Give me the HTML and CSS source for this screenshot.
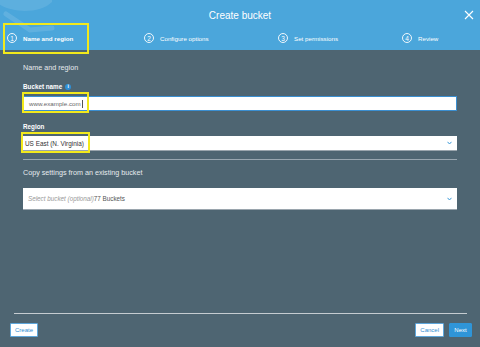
FILE: index.html
```html
<!DOCTYPE html>
<html>
<head>
<meta charset="utf-8">
<link rel="stylesheet" href="styles.css">
</head>
<body>
<div class="page">
  <header class="header">
    <svg class="watermark" width="80" height="50" viewBox="0 0 80 50">
      <path d="M-4 2 C 10 14, 40 14, 52 2 L 52 -4 L -4 -4 Z" fill="rgba(255,255,255,0.10)"/>
      <path d="M6 14 L 30 30 L 52 28" fill="none" stroke="rgba(255,255,255,0.12)" stroke-width="5" stroke-linecap="round"/>
    </svg>
    <div class="title-row">Create bucket</div>
    <svg class="close" width="10" height="10" viewBox="0 0 10 10">
      <path d="M1 1 L9 9 M9 1 L1 9" stroke="#fff" stroke-width="1.1" fill="none"/>
    </svg>
    <div class="steps">
      <div class="step active"><span class="num">1</span><span class="step-text">Name and region</span><span class="hl hl-step"></span></div>
      <div class="step"><span class="num">2</span><span class="step-text">Configure options</span></div>
      <div class="step"><span class="num">3</span><span class="step-text">Set permissions</span></div>
      <div class="step"><span class="num">4</span><span class="step-text">Review</span></div>
    </div>
  </header>

  <main class="content">
    <div class="section-title">Name and region</div>
    <div class="label label-first">Bucket name <span class="info">i</span></div>
    <div class="field">
      <div class="input"><span class="input-text">www.example.com</span><span class="caret"></span></div>
      <span class="hl hl-input"></span>
    </div>
    <div class="label label-region">Region</div>
    <div class="field">
      <div class="select"><span class="select-text">US East (N. Virginia)</span>
        <svg class="chev" width="5" height="4" viewBox="0 0 5 4"><path d="M0.5 0.8 L2.5 3 L4.5 0.8" fill="none" stroke="#3c9ad8" stroke-width="1"/></svg>
      </div>
      <span class="hl hl-select"></span>
    </div>
    <div class="divider"></div>
    <div class="section-title copy-title">Copy settings from an existing bucket</div>
    <div class="select select-big"><span class="select-text"><i class="ph">Select bucket (optional)</i>77 Buckets</span>
      <svg class="chev" width="5" height="4" viewBox="0 0 5 4"><path d="M0.5 0.8 L2.5 3 L4.5 0.8" fill="none" stroke="#3c9ad8" stroke-width="1"/></svg>
    </div>
  </main>

  <footer class="footer">
    <div class="footer-line"></div>
    <div class="buttons">
      <button class="btn btn-outline">Create</button>
      <div class="spacer"></div>
      <button class="btn btn-outline">Cancel</button>
      <button class="btn btn-primary">Next</button>
    </div>
  </footer>
</div>
</body>
</html>
```

FILE: styles.css
```css
html, body {
  margin: 0;
  padding: 0;
  background: #4e6572;
  font-family: "Liberation Sans", Arial, sans-serif;
}
.page {
  width: 480px;
  height: 347px;
  display: flex;
  flex-direction: column;
  overflow: hidden;
}
.header {
  height: 50px;
  background: #4ba6db;
  position: relative;
  flex: none;
}
.watermark {
  position: absolute;
  left: 0;
  top: 0;
}
.title-row {
  position: relative;
  height: 30px;
  display: flex;
  align-items: center;
  justify-content: center;
  color: #fff;
  font-size: 10px;
}
.close {
  position: absolute;
  right: 6px;
  top: 10px;
}
.steps {
  position: relative;
  display: grid;
  grid-template-columns: 137px 134px 124px auto;
  padding-left: 7px;
  margin-top: 3px;
  height: 10px;
}
.step {
  position: relative;
  display: flex;
  align-items: center;
  gap: 6px;
  color: #fff;
  font-size: 6.2px;
}
.step.active .step-text {
  font-weight: bold;
}
.num {
  width: 8px;
  height: 8px;
  border: 1px solid rgba(255,255,255,0.9);
  border-radius: 50%;
  display: flex;
  align-items: center;
  justify-content: center;
  font-size: 6.5px;
  flex: none;
}
.hl {
  position: absolute;
  border: 2px solid #f2e91c;
  box-sizing: border-box;
  pointer-events: none;
}
.hl-step {
  left: -4px;
  top: -10px;
  width: 86px;
  height: 31px;
}
.content {
  padding: 0 23px;
  display: flex;
  flex-direction: column;
}
.section-title {
  color: #e6ebee;
  font-size: 7.2px;
  line-height: 9px;
  margin-top: 13px;
}
.label {
  color: #fff;
  font-weight: bold;
  font-size: 6.3px;
  line-height: 9px;
  display: flex;
  align-items: center;
  gap: 3px;
}
.label-first { margin-top: 10px; }
.label-region { margin-top: 11px; }
.info {
  width: 6px;
  height: 6px;
  border-radius: 50%;
  background: #2f8fd6;
  color: #fff;
  font-size: 5px;
  font-weight: bold;
  display: inline-flex;
  align-items: center;
  justify-content: center;
}
.field {
  position: relative;
  margin-top: 5px;
}
.input {
  height: 15px;
  box-sizing: border-box;
  background: #fff;
  border: 1px solid #3b8fd1;
  display: flex;
  align-items: center;
  padding-left: 5px;
  font-size: 6.2px;
  color: #666;
}
.caret {
  width: 0.6px;
  height: 8px;
  background: #555;
  margin-left: 1px;
}
.hl-input {
  left: -1px;
  top: -4px;
  width: 67px;
  height: 21px;
}
.select {
  position: relative;
  height: 15px;
  box-sizing: border-box;
  background: #fff;
  border-bottom: 1px solid #9aa5ad;
  display: flex;
  align-items: center;
  padding-left: 2px;
  padding-right: 5px;
  font-size: 6.4px;
  color: #333;
}
.select-text { flex: 1; }
.chev { flex: none; }
.hl-select {
  left: -2px;
  top: -4px;
  width: 69px;
  height: 21px;
}
.divider {
  height: 1px;
  background: #98a6b0;
  margin-top: 8px;
}
.copy-title {
  margin-top: 8px;
}
.select-big {
  height: 22px;
  margin-top: 11px;
  padding-left: 5px;
  font-size: 6.3px;
  color: #555;
}
.ph {
  color: #999;
}
.footer {
  margin-top: auto;
  padding-bottom: 10px;
}
.footer-line {
  height: 1px;
  background: #c5ccd1;
  margin: 0 13px 0 14px;
}
.buttons {
  display: flex;
  gap: 5px;
  padding: 0 8px 0 10px;
  margin-top: 9px;
}
.spacer { flex: 1; }
.btn {
  height: 14px;
  box-sizing: border-box;
  font-family: "Liberation Sans", Arial, sans-serif;
  font-size: 6px;
  padding: 0 4px;
  border-radius: 1px;
  margin: 0;
  display: flex;
  align-items: center;
  justify-content: center;
}
.btn-outline {
  background: #fff;
  color: #2f8fd3;
  border: 1px solid #5ea7dc;
  min-width: 28px;
}
.btn-primary {
  background: #2f95d8;
  color: #fff;
  border: 1px solid #2f95d8;
  min-width: 23px;
}
```
